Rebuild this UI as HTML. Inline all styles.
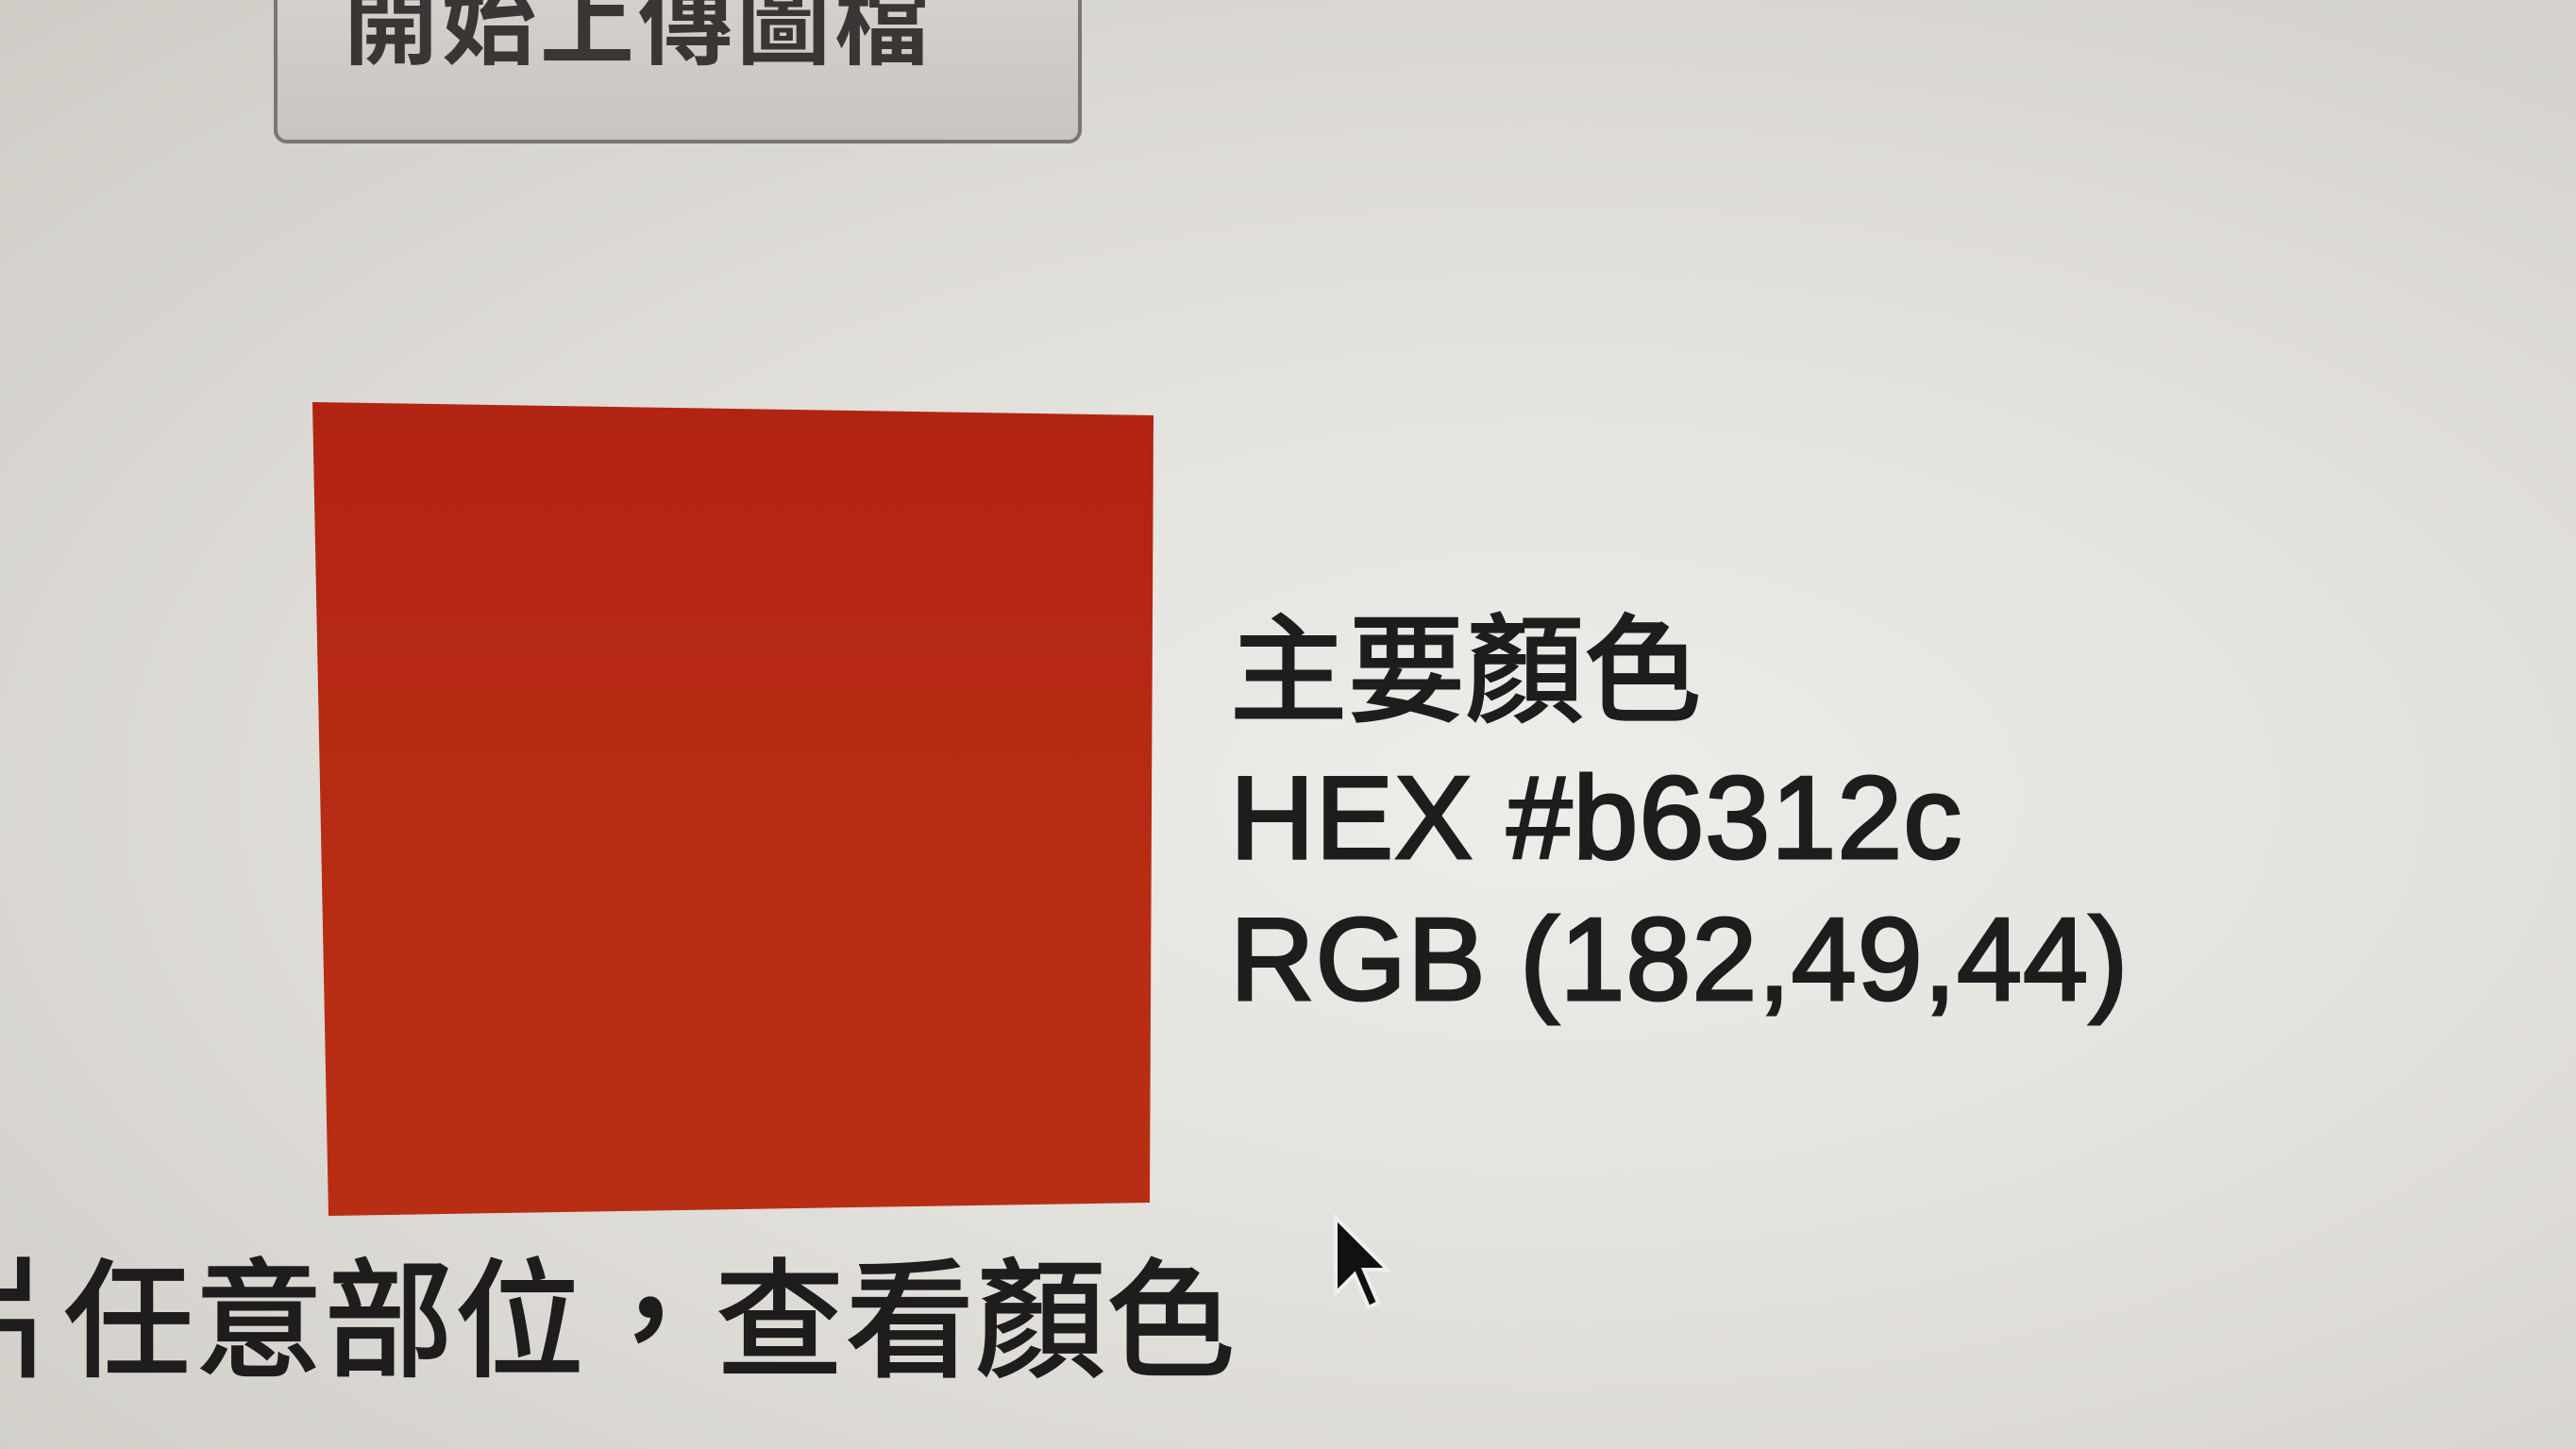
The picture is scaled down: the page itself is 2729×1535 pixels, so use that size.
<!DOCTYPE html>
<html><head><meta charset="utf-8"><style>
html,body{margin:0;padding:0;}
body{width:2729px;height:1535px;overflow:hidden;position:relative;
background:radial-gradient(ellipse at 60% 55%,#eeedea 0%,#e2e0db 45%,#cfccc6 100%);
font-family:"Liberation Sans","Noto Sans CJK TC",sans-serif;color:#1e1c1c;}
.btn{position:absolute;left:290px;top:-40px;width:856px;height:192px;border:4px solid #7a7673;border-radius:14px;
background:linear-gradient(#d7d3cf,#c9c4c0);box-sizing:border-box;}
.btn span{position:absolute;left:70px;top:-20px;font-size:100px;font-weight:bold;color:#3a3636;letter-spacing:4px;}
.sq{position:absolute;left:0;top:0;width:2729px;height:1535px;background:linear-gradient(#ad1c10,#b82c14 60%,#b83014);
clip-path:polygon(331px 426px,1222px 440px,1218px 1274px,348px 1288px);}
.t{position:absolute;left:1303px;font-size:124px;line-height:1;white-space:nowrap;-webkit-text-stroke:3px #1e1c1c;letter-spacing:1px;}
.b{position:absolute;left:-70px;top:1290px;font-size:136px;white-space:nowrap;letter-spacing:2px;-webkit-text-stroke:3px #1e1c1c;}
</style></head><body>
<div class="btn"><span>開始上傳圖檔</span></div>
<div class="sq"></div>
<div class="t" style="top:650px">主要顏色</div>
<div class="t" style="top:805px">HEX #b6312c</div>
<div class="t" style="top:955px">RGB (182,49,44)</div>
<div class="b">片任意部位，查看顏色</div>
<svg style="position:absolute;left:1410px;top:1285px" width="70" height="110" viewBox="0 0 14 22"><path d="M1 1 L1 17 L5 13 L8 20 L10 19 L7 12 L12 12 Z" fill="#111" stroke="#eee" stroke-width="0.8"/></svg>
</body></html>
